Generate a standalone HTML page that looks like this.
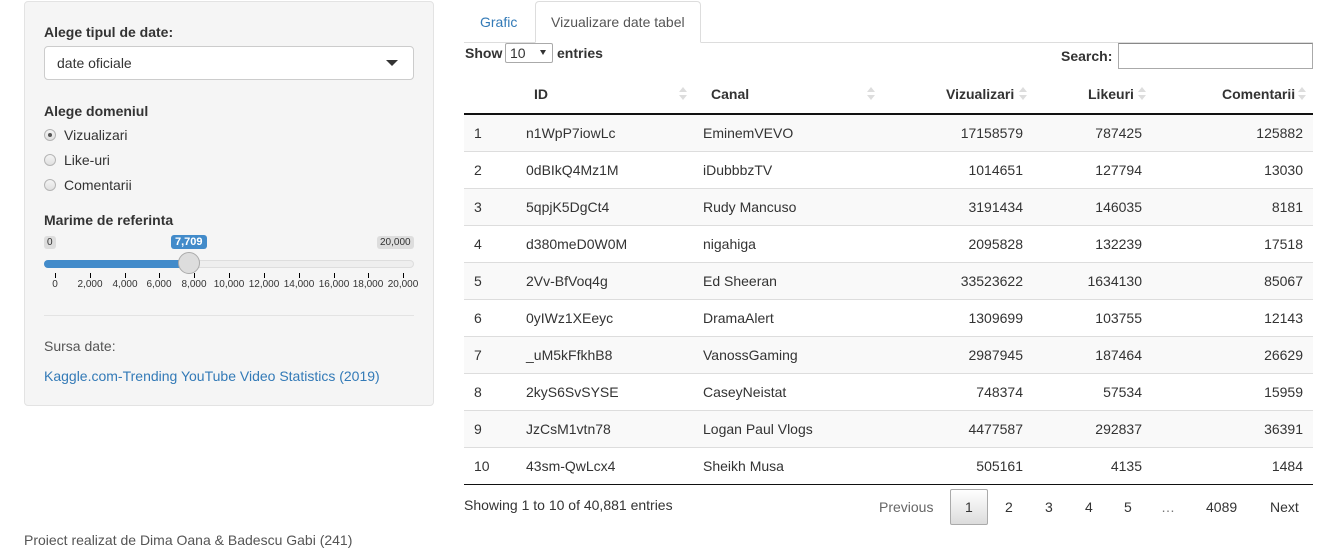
<!DOCTYPE html>
<html><head><meta charset="utf-8"><style>
*{box-sizing:border-box}
body{margin:0;width:1332px;height:560px;background:#fff;font-family:"Liberation Sans",Arial,sans-serif;font-size:14px;color:#333;position:relative;overflow:hidden}
.a{position:absolute;white-space:nowrap}
.b{font-weight:bold}
.well{position:absolute;left:24px;top:1px;width:410px;height:405px;background:#f5f5f5;border:1px solid #e3e3e3;border-radius:4px}
.radio{position:absolute;width:12px;height:12px;border:1px solid #b5b5b5;border-radius:50%;background:linear-gradient(#f4f4f4,#e0e0e0)}
.row{position:absolute;left:464px;width:849px;height:37px;border-top:1px solid #ddd}
.row span{position:absolute;top:10px}
.sort{position:absolute;width:8px;height:14px}
.sort:before{content:"";position:absolute;left:0;top:0;border:4px solid transparent;border-bottom:5px solid #ddd;border-top:0}
.sort:after{content:"";position:absolute;left:0;top:8px;border:4px solid transparent;border-top:5px solid #ddd;border-bottom:0}
.tick{position:absolute;top:273px;width:1px;height:5px;background:#000}
.tl{position:absolute;top:279px;font-size:10px;color:#333;transform:translateX(-50%)}
</style></head><body>
<div class="well"></div>
<div class="a b" style="left:44px;top:24px">Alege tipul de date:</div>
<div class="a" style="left:44px;top:46px;width:370px;height:34px;background:#fff;border:1px solid #ccc;border-radius:4px"></div>
<div class="a" style="left:57px;top:55px">date oficiale</div>
<div class="a" style="left:386px;top:60px;border:6px solid transparent;border-top:6px solid #333;border-bottom:0"></div>
<div class="a b" style="left:44px;top:103px">Alege domeniul</div>
<div class="radio" style="left:44px;top:129px"><div style="position:absolute;left:3px;top:3px;width:4px;height:4px;border-radius:50%;background:#555"></div></div>
<div class="a" style="left:64px;top:127px">Vizualizari</div>
<div class="radio" style="left:44px;top:154px"></div>
<div class="a" style="left:64px;top:152px">Like-uri</div>
<div class="radio" style="left:44px;top:179px"></div>
<div class="a" style="left:64px;top:177px">Comentarii</div>
<div class="a b" style="left:44px;top:212px">Marime de referinta</div>
<div class="a" style="left:44px;top:236px;font-size:10px;background:#ddd;color:#333;padding:1px 3px;border-radius:3px">0</div>
<div class="a" style="left:377px;top:236px;font-size:10px;background:#ddd;color:#333;padding:1px 3px;border-radius:3px">20,000</div>
<div class="a b" style="left:171px;top:235px;font-size:11px;background:#428bca;color:#fff;padding:1px 4px;border-radius:3px">7,709</div>
<div class="a" style="left:44px;top:260px;width:370px;height:8px;background:#eee;border:1px solid #ddd;border-radius:4px"></div>
<div class="a" style="left:44px;top:260px;width:145px;height:8px;background:#428bca;border-radius:4px 0 0 4px"></div>
<div class="a" style="left:178px;top:252px;width:22px;height:22px;border-radius:50%;background:#ddd;border:1px solid #aaa"></div>
<div class="tick" style="left:55px"></div><div class="tick" style="left:90px"></div><div class="tick" style="left:125px"></div><div class="tick" style="left:159px"></div><div class="tick" style="left:194px"></div><div class="tick" style="left:229px"></div><div class="tick" style="left:264px"></div><div class="tick" style="left:299px"></div><div class="tick" style="left:334px"></div><div class="tick" style="left:368px"></div><div class="tick" style="left:403px"></div>
<div class="tl" style="left:55px">0</div><div class="tl" style="left:90px">2,000</div><div class="tl" style="left:125px">4,000</div><div class="tl" style="left:159px">6,000</div><div class="tl" style="left:194px">8,000</div><div class="tl" style="left:229px">10,000</div><div class="tl" style="left:264px">12,000</div><div class="tl" style="left:299px">14,000</div><div class="tl" style="left:334px">16,000</div><div class="tl" style="left:368px">18,000</div><div class="tl" style="left:403px">20,000</div>
<div class="a" style="left:44px;top:315px;width:370px;height:1px;background:#e3e3e3"></div>
<div class="a" style="left:44px;top:338px;color:#555">Sursa date:</div>
<div class="a" style="left:44px;top:368px;color:#337ab7">Kaggle.com-Trending YouTube Video Statistics (2019)</div>
<div class="a" style="left:24px;top:532px;color:#555">Proiect realizat de Dima Oana &amp; Badescu Gabi (241)</div>

<div class="a" style="left:464px;top:42px;width:849px;height:1px;background:#ddd"></div>
<div class="a" style="left:480px;top:14px;color:#337ab7">Grafic</div>
<div class="a" style="left:535px;top:1px;width:166px;height:42px;background:#fff;border:1px solid #ddd;border-bottom-color:#fff;border-radius:4px 4px 0 0"></div>
<div class="a" style="left:551px;top:14px;color:#555">Vizualizare date tabel</div>
<div class="a b" style="left:465px;top:45px">Show</div>
<div class="a" style="left:505px;top:43px;width:48px;height:20px;border:1px solid #aaa;border-radius:2px;background:#fff"></div>
<div class="a" style="left:510px;top:45px">10</div>
<div class="a" style="left:540px;top:50px;border:3.5px solid transparent;border-top:5px solid #333;border-bottom:0"></div>
<div class="a b" style="left:557px;top:45px">entries</div>
<div class="a b" style="left:1061px;top:48px">Search:</div>
<div class="a" style="left:1118px;top:43px;width:195px;height:26px;border:1px solid #aaa;border-top-color:#888;background:#fff"></div>

<div class="a b" style="left:534px;top:86px">ID</div><div class="sort" style="left:679px;top:87px"></div>
<div class="a b" style="left:711px;top:86px">Canal</div><div class="sort" style="left:867px;top:87px"></div>
<div class="a b" style="left:946px;top:86px">Vizualizari</div><div class="sort" style="left:1019px;top:87px"></div>
<div class="a b" style="left:1088px;top:86px">Likeuri</div><div class="sort" style="left:1138px;top:87px"></div>
<div class="a b" style="left:1222px;top:86px">Comentarii</div><div class="sort" style="left:1298px;top:87px"></div>
<div class="a" style="left:464px;top:113px;width:849px;height:2px;background:#111"></div>

<div class="row" style="top:115px;background:#f9f9f9;border-top:0"><span style="left:10px;top:10px">1</span><span style="left:62px;top:10px">n1WpP7iowLc</span><span style="left:239px;top:10px">EminemVEVO</span><span style="right:290px;top:10px">17158579</span><span style="right:171px;top:10px">787425</span><span style="right:10px;top:10px">125882</span></div>
<div class="row" style="top:151px"><span style="left:10px">2</span><span style="left:62px">0dBIkQ4Mz1M</span><span style="left:239px">iDubbbzTV</span><span style="right:290px">1014651</span><span style="right:171px">127794</span><span style="right:10px">13030</span></div>
<div class="row" style="top:188px;background:#f9f9f9"><span style="left:10px">3</span><span style="left:62px">5qpjK5DgCt4</span><span style="left:239px">Rudy Mancuso</span><span style="right:290px">3191434</span><span style="right:171px">146035</span><span style="right:10px">8181</span></div>
<div class="row" style="top:225px"><span style="left:10px">4</span><span style="left:62px">d380meD0W0M</span><span style="left:239px">nigahiga</span><span style="right:290px">2095828</span><span style="right:171px">132239</span><span style="right:10px">17518</span></div>
<div class="row" style="top:262px;background:#f9f9f9"><span style="left:10px">5</span><span style="left:62px">2Vv-BfVoq4g</span><span style="left:239px">Ed Sheeran</span><span style="right:290px">33523622</span><span style="right:171px">1634130</span><span style="right:10px">85067</span></div>
<div class="row" style="top:299px"><span style="left:10px">6</span><span style="left:62px">0yIWz1XEeyc</span><span style="left:239px">DramaAlert</span><span style="right:290px">1309699</span><span style="right:171px">103755</span><span style="right:10px">12143</span></div>
<div class="row" style="top:336px;background:#f9f9f9"><span style="left:10px">7</span><span style="left:62px">_uM5kFfkhB8</span><span style="left:239px">VanossGaming</span><span style="right:290px">2987945</span><span style="right:171px">187464</span><span style="right:10px">26629</span></div>
<div class="row" style="top:373px"><span style="left:10px">8</span><span style="left:62px">2kyS6SvSYSE</span><span style="left:239px">CaseyNeistat</span><span style="right:290px">748374</span><span style="right:171px">57534</span><span style="right:10px">15959</span></div>
<div class="row" style="top:410px;background:#f9f9f9"><span style="left:10px">9</span><span style="left:62px">JzCsM1vtn78</span><span style="left:239px">Logan Paul Vlogs</span><span style="right:290px">4477587</span><span style="right:171px">292837</span><span style="right:10px">36391</span></div>
<div class="row" style="top:447px"><span style="left:10px">10</span><span style="left:62px">43sm-QwLcx4</span><span style="left:239px">Sheikh Musa</span><span style="right:290px">505161</span><span style="right:171px">4135</span><span style="right:10px">1484</span></div>
<div class="a" style="left:464px;top:484px;width:849px;height:1px;background:#111"></div>

<div class="a" style="left:464px;top:497px">Showing 1 to 10 of 40,881 entries</div>
<div class="a" style="left:879px;top:499px;color:#666">Previous</div>
<div class="a" style="left:950px;top:489px;width:38px;height:36px;border:1px solid #aaa;border-radius:2px;background:linear-gradient(#fff,#dcdcdc)"></div>
<div class="a" style="left:965px;top:499px">1</div>
<div class="a" style="left:1005px;top:499px">2</div>
<div class="a" style="left:1045px;top:499px">3</div>
<div class="a" style="left:1085px;top:499px">4</div>
<div class="a" style="left:1124px;top:499px">5</div>
<div class="a" style="left:1161px;top:499px;color:#777">…</div>
<div class="a" style="left:1206px;top:499px">4089</div>
<div class="a" style="left:1270px;top:499px">Next</div>
</body></html>
